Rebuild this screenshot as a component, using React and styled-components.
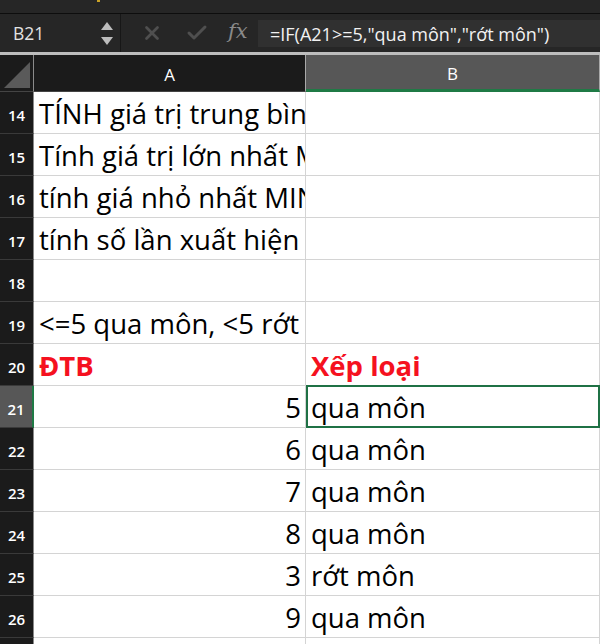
import styled, { createGlobalStyle } from "styled-components";
import { X, Check } from "lucide-react";

const GlobalStyle = createGlobalStyle`
  html, body {
    margin: 0;
    padding: 0;
    background: #ffffff;
    overflow: hidden;
  }
  * {
    box-sizing: border-box;
  }
`;

const rows = [
  { n: 14, a: "TÍNH giá trị trung bình" },
  { n: 15, a: "Tính giá trị lớn nhất MAX" },
  { n: 16, a: "tính giá nhỏ nhất MIN" },
  { n: 17, a: "tính số lần xuất hiện" },
  { n: 18 },
  { n: 19, a: "<=5 qua môn, <5 rớt môn" },
  { n: 20, a: "ĐTB", b: "Xếp loại", head: true },
  { n: 21, num: 5, b: "qua môn", selected: true },
  { n: 22, num: 6, b: "qua môn" },
  { n: 23, num: 7, b: "qua môn" },
  { n: 24, num: 8, b: "qua môn" },
  { n: 25, num: 3, b: "rớt môn" },
  { n: 26, num: 9, b: "qua môn" },
  { n: 27 },
];

export default function App() {
  return (
    <Page>
      <GlobalStyle />
      <TopStrip>
        <Dot />
      </TopStrip>
      <FormulaBar>
        <NameBox>
          <NameText>B21</NameText>
          <Spinner>
            <Tri />
            <Tri $down />
          </Spinner>
        </NameBox>
        <Actions>
          <X size={22} strokeWidth={3} color="#4f4f4f" />
          <Check size={24} strokeWidth={3} color="#4f4f4f" />
          <Fx>fx</Fx>
        </Actions>
        <FormulaInput>=IF(A21&gt;=5,"qua môn","rớt môn")</FormulaInput>
      </FormulaBar>
      <Sheet>
        <Corner>
          <CornerTri />
        </Corner>
        <ColHead>A</ColHead>
        <ColHead $active>B</ColHead>
        {rows.map((r) => (
          <Row key={r.n} r={r} />
        ))}
      </Sheet>
    </Page>
  );
}

function Row({ r }) {
  return (
    <>
      <RowHead $active={r.selected}>{r.n}</RowHead>
      {r.num !== undefined ? (
        <Cell $right>{r.num}</Cell>
      ) : (
        <Cell $red={r.head}>{r.a}</Cell>
      )}
      <Cell $red={r.head} $selected={r.selected}>
        {r.b}
      </Cell>
    </>
  );
}

const Page = styled.div`
  width: 600px;
  height: 644px;
  overflow: hidden;
  display: flex;
  flex-direction: column;
  background: #ffffff;

  & > * {
    flex-shrink: 0;
  }
`;

const TopStrip = styled.div`
  height: 14px;
  background: #262626;
  border-bottom: 1px solid #0d0d0d;
  position: relative;
`;

const Dot = styled.span`
  position: absolute;
  left: 97px;
  top: 0;
  width: 3px;
  height: 2px;
  background: #c9a227;
`;

const FormulaBar = styled.div`
  height: 41px;
  background: #262626;
  display: flex;
  align-items: center;
  border-bottom: 3px solid #bdbdbd;
`;

const NameBox = styled.div`
  width: 121px;
  height: 100%;
  display: flex;
  align-items: center;
  justify-content: space-between;
  padding: 0 7px 0 13px;
  border-right: 1px solid #171717;
`;

const NameText = styled.span`
  font-family: "Open Sans", "Liberation Sans", sans-serif;
  font-size: 17.5px;
  color: #e2e2e2;
`;

const Spinner = styled.div`
  display: flex;
  flex-direction: column;
  gap: 7px;
`;

const Tri = styled.span`
  width: 0;
  height: 0;
  border-left: 6px solid transparent;
  border-right: 6px solid transparent;
  ${(p) =>
    p.$down
      ? "border-top: 8px solid #bdbdbd;"
      : "border-bottom: 8px solid #bdbdbd;"}
`;

const Actions = styled.div`
  display: flex;
  align-items: center;
  gap: 22px;
  padding-left: 20px;
  width: 137px;
`;

const Fx = styled.span`
  font-family: "DejaVu Serif", "Liberation Serif", serif;
  font-style: italic;
  font-size: 21px;
  color: #8a8a8a;
  margin-top: -4px;
  margin-left: -3px;
`;

const FormulaInput = styled.div`
  flex: 1;
  align-self: stretch;
  margin: 6px 0 5px 0;
  background: #303030;
  display: flex;
  align-items: center;
  padding-left: 12px;
  font-family: "Open Sans", "Liberation Sans", sans-serif;
  font-size: 18px;
  color: #f2f2f2;
  white-space: nowrap;
`;

const Sheet = styled.div`
  display: grid;
  grid-template-columns: 34px 272px 294px;
  grid-template-rows: 37px;
  grid-auto-rows: 42px;
  font-family: "Open Sans", "Liberation Sans", sans-serif;
`;

const Corner = styled.div`
  background: #1b1b1b;
  border-right: 1px solid #8a8a8a;
  border-bottom: 1px solid #444;
  position: relative;
`;

const CornerTri = styled.span`
  position: absolute;
  right: 3px;
  bottom: 3px;
  width: 0;
  height: 0;
  border-left: 26px solid transparent;
  border-bottom: 26px solid #5a5a5a;
`;

const ColHead = styled.div`
  background: ${(p) => (p.$active ? "#575757" : "#1b1b1b")};
  border-right: 1px solid #a9a9a9;
  border-bottom: ${(p) => (p.$active ? "3px solid #1f7a45" : "1px solid #444")};
  color: #ffffff;
  font-size: 17px;
  display: flex;
  align-items: center;
  justify-content: center;
  padding-top: 2px;
`;

const RowHead = styled.div`
  background: ${(p) => (p.$active ? "#575757" : "#1b1b1b")};
  border-right: ${(p) => (p.$active ? "2px solid #1f7a45" : "1px solid #8a8a8a")};
  border-bottom: 1px solid #3a3a3a;
  color: #ffffff;
  font-size: 15px;
  font-weight: 600;
  display: flex;
  align-items: flex-end;
  justify-content: center;
  padding-bottom: 8px;
`;

const Cell = styled.div`
  position: relative;
  border-right: 1px solid #d4d4d4;
  border-bottom: 1px solid #d4d4d4;
  color: ${(p) => (p.$red ? "#f5111f" : "#000000")};
  font-weight: ${(p) => (p.$red ? 700 : 400)};
  font-size: 27.5px;
  line-height: 1;
  display: flex;
  align-items: flex-end;
  justify-content: ${(p) => (p.$right ? "flex-end" : "flex-start")};
  padding: 0 4px 6px 5px;
  white-space: nowrap;
  overflow: hidden;
  ${(p) =>
    p.$selected &&
    `
    outline: 2px solid #1f7145;
    outline-offset: -2px;
    border-top: 1px solid #1f7145;
    margin-top: -1px;
  `}
`;
